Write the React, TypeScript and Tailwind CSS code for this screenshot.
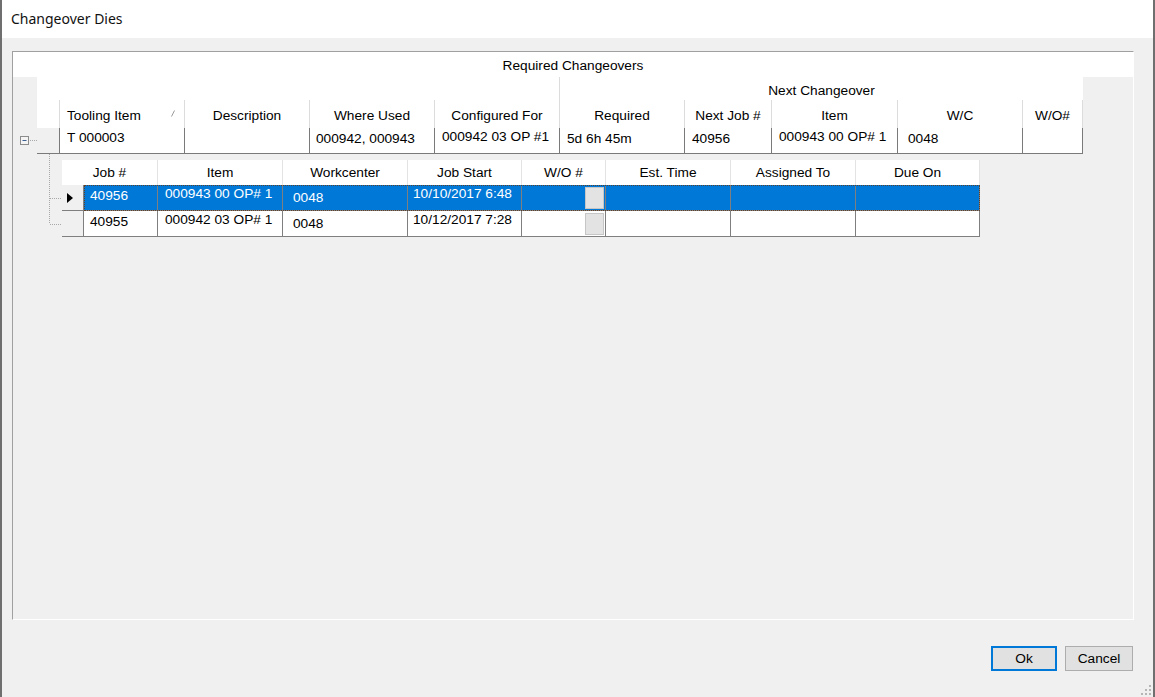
const masterCols =
  "grid grid-cols-[23px_125px_125px_125px_125px_125px_87px_126px_125px_60px]";
const childHeadCols =
  "grid grid-cols-[96px_125px_125px_114px_84px_125px_125px_124px]";
const childCols =
  "grid grid-cols-[22px_74px_125px_125px_114px_84px_125px_125px_124px]";

const headLabels = [
  "",
  "Tooling Item",
  "Description",
  "Where Used",
  "Configured For",
  "Required",
  "Next Job #",
  "Item",
  "W/C",
  "W/O#",
];

// text + padding classes for the one master row
const masterRow = [
  { t: "T 000003", c: "pl-[7px] pt-[2px]" },
  { t: "", c: "" },
  { t: "000942, 000943", c: "pl-[6px] pt-[3px]" },
  { t: "000942 03 OP #1", c: "pl-[7px] pt-[1px]" },
  { t: "5d 6h 45m", c: "pl-[7px] pt-[3px]" },
  { t: "40956", c: "pl-[7px] pt-[3px]" },
  { t: "000943 00 OP# 1", c: "pl-[7px] pt-[1px]" },
  { t: "0048", c: "pl-[10px] pt-[3px]" },
  { t: "", c: "" },
];

const childHead = [
  "Job #",
  "Item",
  "Workcenter",
  "Job Start",
  "W/O #",
  "Est. Time",
  "Assigned To",
  "Due On",
];

const jobs = [
  { job: "40956", item: "000943 00 OP# 1", wc: "0048", start: "10/10/2017 6:48", selected: true },
  { job: "40955", item: "000942 03 OP# 1", wc: "0048", start: "10/12/2017 7:28", selected: false },
];

function CollapseBox() {
  return (
    <svg width="24" height="25" viewBox="0 0 24 25">
      <rect x="7.5" y="8.5" width="8" height="8" fill="#f4f4f4" stroke="#8c8c8c" />
      <line x1="9.5" y1="12.5" x2="13.5" y2="12.5" stroke="#3d5e93" />
      <line x1="17" y1="12.5" x2="24" y2="12.5" stroke="#a8a8a8" strokeDasharray="1 1" />
    </svg>
  );
}

function TreeLines() {
  return (
    <svg width="49" height="84" viewBox="0 0 49 84" className="shrink-0">
      <line x1="36.5" y1="0" x2="36.5" y2="70" stroke="#a8a8a8" strokeDasharray="1 1" />
      <line x1="37" y1="44.5" x2="49" y2="44.5" stroke="#a8a8a8" strokeDasharray="1 1" />
      <line x1="37" y1="70.5" x2="49" y2="70.5" stroke="#a8a8a8" strokeDasharray="1 1" />
    </svg>
  );
}

function SizeGrip() {
  const dots = [
    [9, 1],
    [5, 5],
    [9, 5],
    [1, 9],
    [5, 9],
    [9, 9],
  ];
  return (
    <svg width="12" height="12" viewBox="0 0 12 12">
      {dots.map(([x, y], i) => (
        <rect key={i} x={x} y={y} width="2" height="2" fill="#b5b5b5" />
      ))}
    </svg>
  );
}

function JobRow({ r }: { r: (typeof jobs)[number] }) {
  const cell = r.selected
    ? "bg-[#0078d7] text-white border-r border-[#7f7f7f]"
    : "bg-white text-black border-r border-[#7f7f7f]";
  return (
    <div className={`${childCols} relative h-[26px] border-b border-[#7f7f7f]`}>
      <div className="bg-[#f0f0f0] border-r border-[#7f7f7f] flex items-center pl-[5px]">
        {r.selected && (
          <svg width="7" height="10" viewBox="0 0 7 10">
            <path d="M0 0 L6 5 L0 10 Z" fill="#000" />
          </svg>
        )}
      </div>
      <div className={`${cell} pl-[6px] pt-[3px]`}>{r.job}</div>
      <div className={`${cell} pl-[7px] pt-[1px]`}>{r.item}</div>
      <div className={`${cell} pl-[10px] pt-[5px]`}>{r.wc}</div>
      <div className={`${cell} pl-[5px] pt-[1px]`}>{r.start}</div>
      <div className={`${cell} flex justify-end items-center pr-[1px]`}>
        <div className="w-[19px] h-[22px] bg-[#e3e3e3] border border-[#c6c6c6]" />
      </div>
      <div className={cell} />
      <div className={cell} />
      <div className={cell} />
      {r.selected && (
        <div className="absolute left-[22px] right-0 top-0 bottom-[-1px] border border-dotted border-[#5e4128]" />
      )}
    </div>
  );
}

export default function App() {
  return (
    <div className="w-[1155px] h-[697px] bg-[#f0f0f0] border-x-2 border-[#6f6f6f] flex flex-col overflow-hidden font-['Liberation_Sans',Arial,sans-serif] text-[13.7px] leading-[16px] text-black">
      {/* title bar */}
      <div className="h-[38px] shrink-0 bg-white flex items-center pl-[9px] font-['Noto_Sans',sans-serif] text-[14px] text-[#111]">
        Changeover Dies
      </div>

      {/* grid panel */}
      <div className="ml-[10px] mt-[13px] w-[1122px] h-[569px] shrink-0 border border-t-[#a0a0a0] border-l-[#a0a0a0] border-r-white border-b-white flex flex-col">
        <div className="h-[25px] bg-white flex items-center justify-center pt-[2px]">Required Changeovers</div>

        {/* master header */}
        <div className="flex h-[51px]">
          <div className="w-[24px] shrink-0" />
          <div className={`${masterCols} grid-rows-[23px_28px] w-[1046px] bg-white`}>
            <div className="col-span-5 border-r border-[#dcdcdc]" />
            <div className="col-span-5 flex items-center justify-center pt-[5px]">Next Changeover</div>
            {headLabels.map((h, i) =>
              i === 1 ? (
                <div key={i} className="relative border-r border-[#dcdcdc] flex items-center pl-[7px] pt-[4px]">
                  {h}
                  <svg width="4" height="7" viewBox="0 0 4 7" className="absolute right-[9px] top-[10px]">
                    <line x1="0.5" y1="6.5" x2="3.5" y2="0.5" stroke="#9a9a9a" />
                  </svg>
                </div>
              ) : (
                <div key={i} className="border-r border-[#dcdcdc] flex items-center justify-center pt-[4px]">
                  {h}
                </div>
              )
            )}
          </div>
        </div>

        {/* master row */}
        <div className="flex h-[26px]">
          <div className="w-[24px] shrink-0">
            <CollapseBox />
          </div>
          <div className={`${masterCols} w-[1046px] border-b border-[#7a7a7a]`}>
            <div className="bg-[#f0f0f0] border-r border-[#7a7a7a]" />
            {masterRow.map((c, i) => (
              <div key={i} className={`bg-white border-r border-[#7a7a7a] whitespace-nowrap ${c.c}`}>
                {c.t}
              </div>
            ))}
          </div>
        </div>

        {/* child band */}
        <div className="flex">
          <TreeLines />
          <div className="mt-[6px] w-[918px]">
            <div className={`${childHeadCols} h-[25px] bg-white`}>
              {childHead.map((h) => (
                <div key={h} className="border-r border-[#e3e3e3] flex items-center justify-center">
                  {h}
                </div>
              ))}
            </div>
            {jobs.map((r) => (
              <JobRow key={r.job} r={r} />
            ))}
          </div>
        </div>
      </div>

      {/* buttons */}
      <div className="ml-[10px] mt-[26px] w-[1121px] flex justify-end gap-[8px] shrink-0">
        <button className="w-[66px] h-[25px] bg-[#e1e1e1] border-2 border-[#0078d7] text-black">Ok</button>
        <button className="w-[68px] h-[25px] bg-[#e1e1e1] border border-[#adadad] text-black">Cancel</button>
      </div>

      <div className="flex-1 flex justify-end items-end pr-[1px] pb-[1px]">
        <SizeGrip />
      </div>
    </div>
  );
}
